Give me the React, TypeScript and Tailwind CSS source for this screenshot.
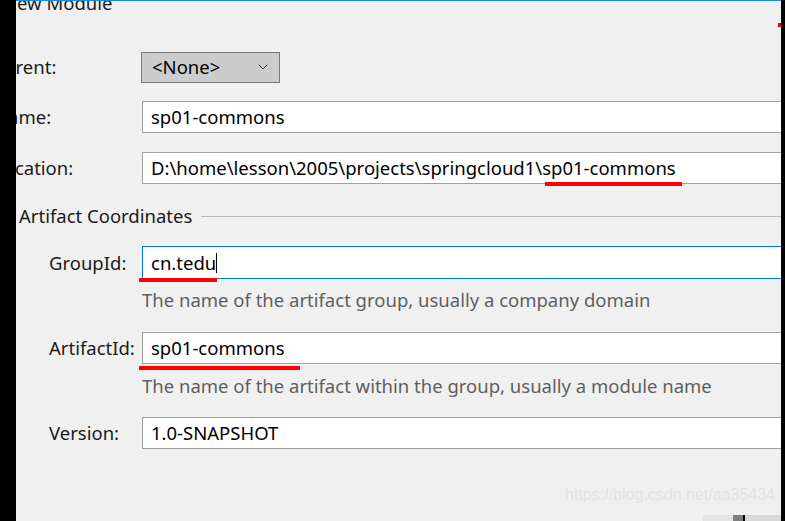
import { ChevronDown } from "lucide-react";

const font = { fontFamily: '"Noto Sans", "Open Sans", sans-serif' };

function Label(props: { text: string; clipped?: boolean }) {
  return (
    <div className="w-[126px] shrink-0 text-[18.5px] text-[#1b1b1b] whitespace-nowrap">
      <span className={props.clipped ? "-ml-[22px] inline-block" : "ml-[33px] inline-block"}>{props.text}</span>
    </div>
  );
}

function Field(props: { value: string; focused?: boolean; children?: React.ReactNode }) {
  return (
    <div
      className={
        "relative flex-1 flex items-center bg-white border border-r-0 pl-[8px] text-[18.5px] text-black whitespace-nowrap " +
        (props.focused ? "border-[#0078d7] h-[33px]" : "border-[#a0a0a0] h-[32px]")
      }
    >
      {props.value}
      {props.children}
    </div>
  );
}

function Help(props: { text: string }) {
  return (
    <div className="flex h-[20px] items-center">
      <div className="w-[126px] shrink-0" />
      <div className="text-[18.5px] text-[#5f5f5f] whitespace-nowrap">{props.text}</div>
    </div>
  );
}

export default function App() {
  return (
    <div className="w-[785px] h-[521px] flex bg-black overflow-hidden" style={font}>
      <div className="w-[16px] shrink-0 bg-black" />
      <div className="relative w-[765px] shrink-0 h-full bg-[#f0f0f0] border-t border-[#1a8ad4] overflow-hidden flex flex-col">
        <div className="h-[50px]">
          <div className="-mt-[8px] -ml-[13px] leading-[20px] text-[18.5px] text-[#1b1b1b]">New Module</div>
        </div>

        <div className="flex items-center h-[32px]">
          <Label text="Parent:" clipped />
          <div className="-ml-[1px] w-[139px] h-[31px] flex items-center justify-between bg-[#cccccc] border border-[#7a7a7a] pl-[10px] pr-[8px] text-[18.5px] text-black">
            <span>&lt;None&gt;</span>
            <ChevronDown size={16} strokeWidth={1.5} className="text-[#333]" />
          </div>
        </div>

        <div className="flex items-center h-[32px] mt-[18px]">
          <Label text="Name:" clipped />
          <Field value="sp01-commons" />
        </div>

        <div className="flex items-center h-[32px] mt-[19px]">
          <Label text="Location:" clipped />
          <Field value="D:\home\lesson\2005\projects\springcloud1\sp01-commons">
            <div className="absolute left-[402px] top-[29px] w-[137px] h-[4px] bg-[#ff0000]" />
          </Field>
        </div>

        <div className="flex items-center h-[20px] mt-[22px]">
          <span className="ml-[3px] text-[18.5px] text-[#1b1b1b] whitespace-nowrap">Artifact Coordinates</span>
          <div className="ml-[9px] flex-1 h-px bg-[#b9b9b9]" />
        </div>

        <div className="flex items-center h-[33px] mt-[20px]">
          <Label text="GroupId:" />
          <Field value="cn.tedu" focused>
            <div className="w-px h-[20px] bg-black" />
            <div className="absolute -left-[4px] top-[31px] w-[78px] h-[4px] bg-[#ff0000]" />
          </Field>
        </div>
        <div className="mt-[11px]">
          <Help text="The name of the artifact group, usually a company domain" />
        </div>

        <div className="flex items-center h-[32px] mt-[22px]">
          <Label text="ArtifactId:" />
          <Field value="sp01-commons">
            <div className="absolute -left-[4px] top-[33px] w-[161px] h-[4px] bg-[#ff0000]" />
          </Field>
        </div>
        <div className="mt-[12px]">
          <Help text="The name of the artifact within the group, usually a module name" />
        </div>

        <div className="flex items-center h-[32px] mt-[21px]">
          <Label text="Version:" />
          <Field value="1.0-SNAPSHOT" />
        </div>

        <div className="flex-1 flex flex-col items-end justify-end">
          <div
            className="mr-[6px] mb-[8px] text-[16px] text-[#e2e2e2]"
            style={{ fontFamily: '"Liberation Sans", Arial, sans-serif' }}
          >
            https://blog.csdn.net/aa35434
          </div>
          <div className="flex h-[6px] w-[78px]">
            <div className="w-[30px] bg-[#e4e4e4]" />
            <div className="w-[10px] bg-[#808080]" />
            <div className="w-[2px] bg-black" />
            <div className="flex-1 bg-[#d8d8d8]" />
          </div>
        </div>

        <div className="absolute right-0 top-[22px] w-[3px] h-[4px] bg-[#ff0000]" />
      </div>
      <div className="w-[4px] shrink-0 bg-black" />
    </div>
  );
}
